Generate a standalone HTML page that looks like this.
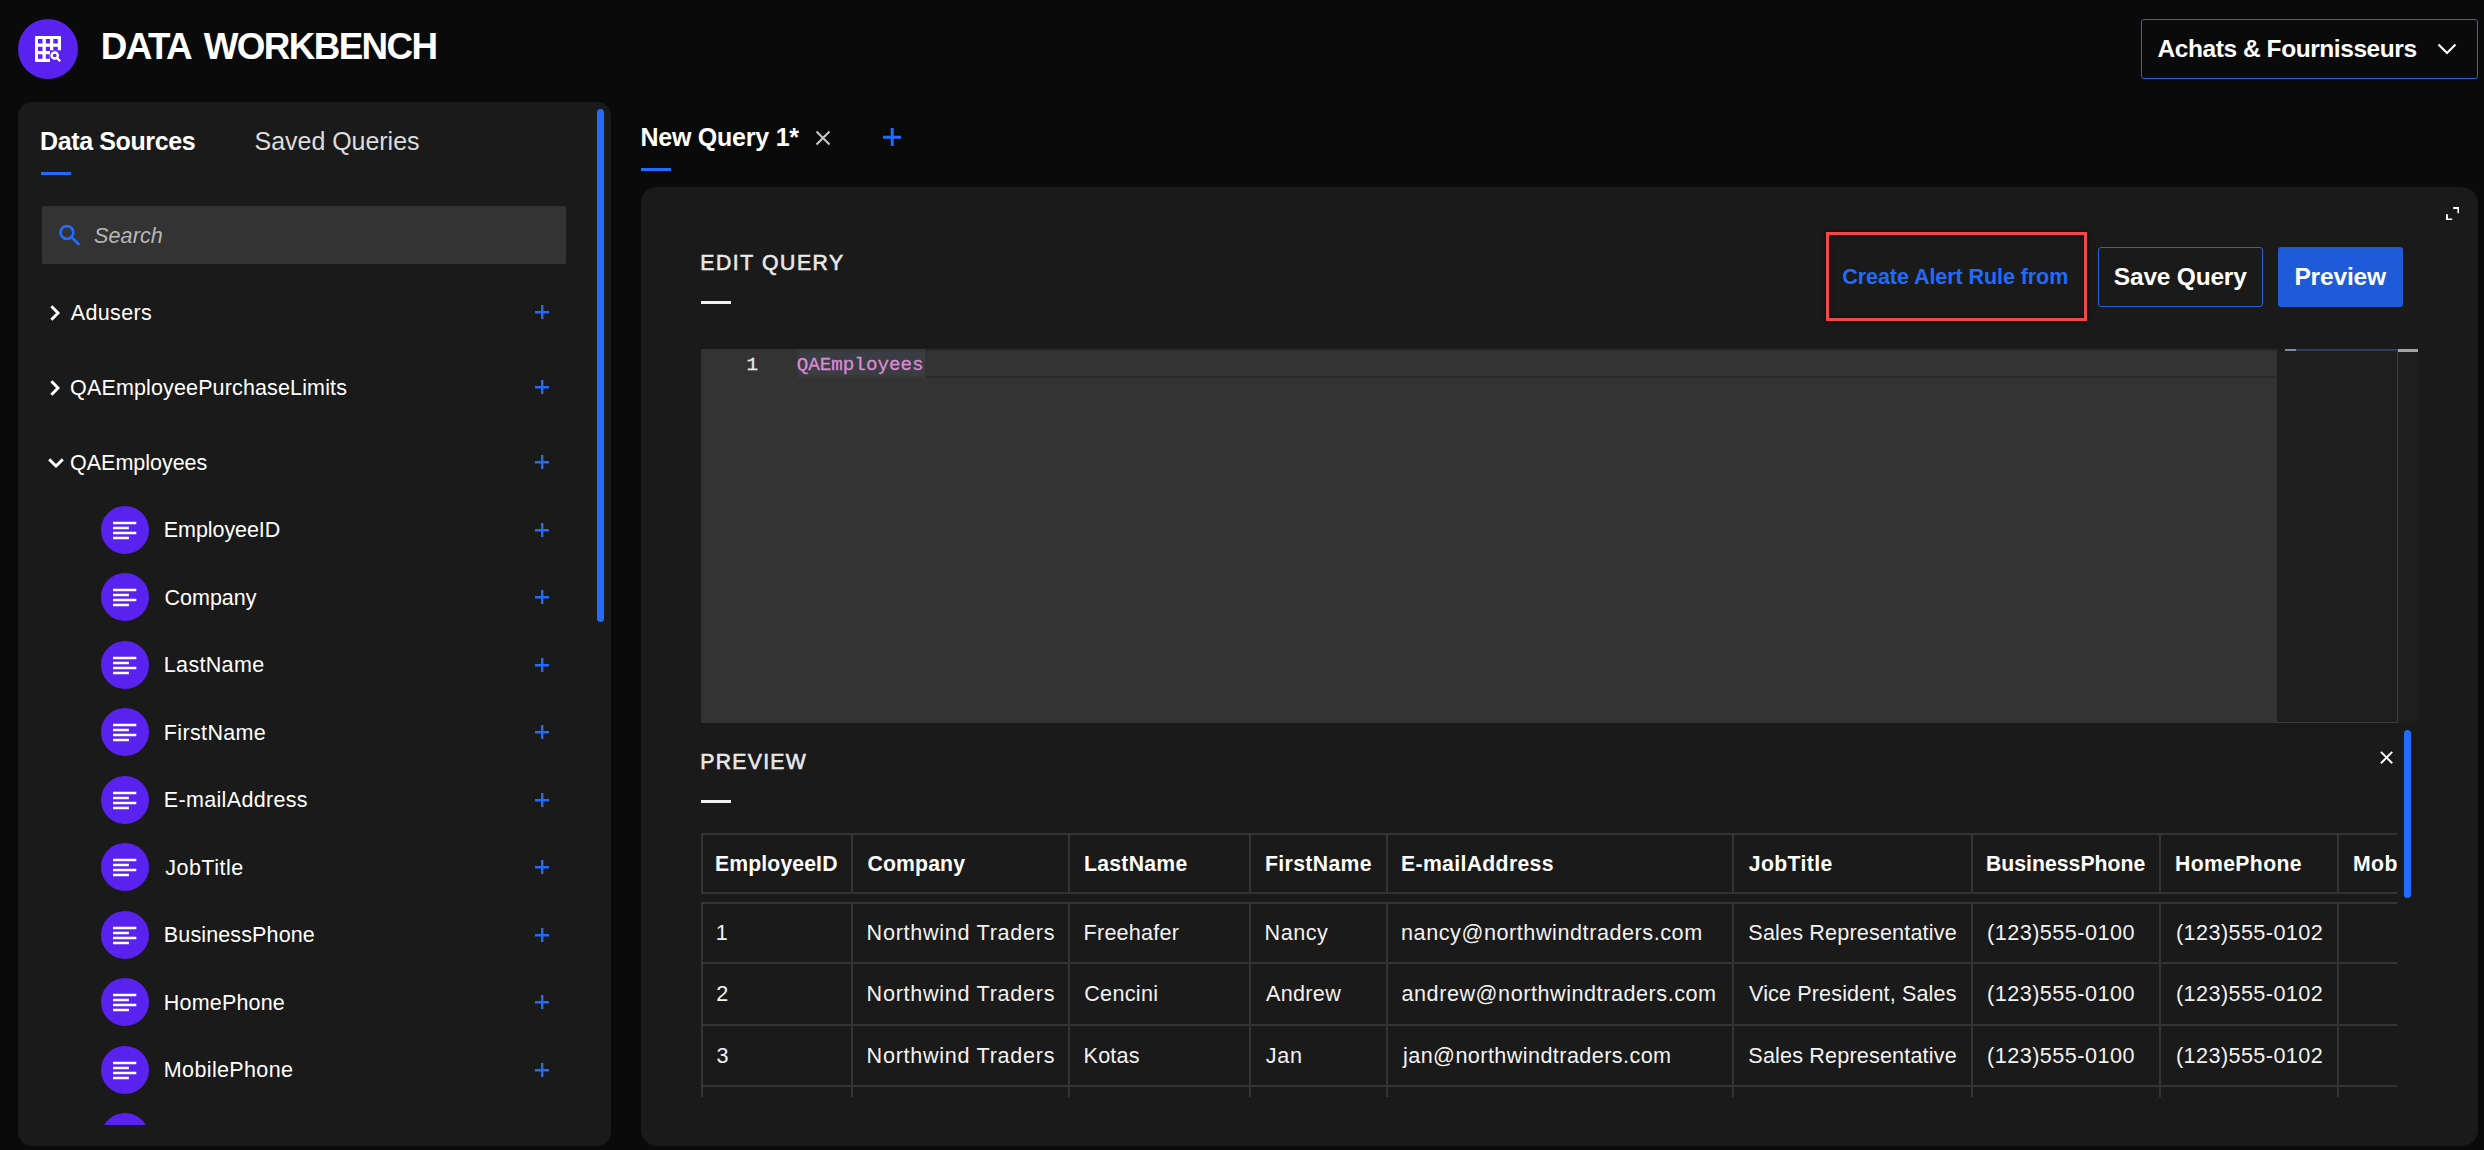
<!DOCTYPE html>
<html><head><meta charset="utf-8"><title>Data Workbench</title>
<style>
html,body{margin:0;padding:0;background:#0a0a0a;}
body{width:2484px;height:1150px;position:relative;overflow:hidden;font-family:"Liberation Sans", sans-serif;}
.a{position:absolute;display:block}
.t{position:absolute;display:block;white-space:nowrap;line-height:1;font-family:"Liberation Sans", sans-serif}
</style></head><body>
<div class="a" style="left:18px;top:19px;width:60px;height:60px;border-radius:50%;background:#5a22ee"></div>
<svg class="a" style="left:35px;top:36px" width="27" height="27" viewBox="0 0 27 27">
<path fill="#fff" d="M0.8 0H25.2Q26 0 26 0.8V14.3H15V26H0.8Q0 26 0 25.2V0.8Q0 0 0.8 0Z"/>
<g fill="#5a22ee"><rect x="3" y="3" width="4.5" height="4.5"/><rect x="10.8" y="3" width="4.2" height="4.5"/><rect x="18.3" y="3" width="4.5" height="4.5"/>
<rect x="3" y="10.8" width="4.5" height="4.2"/><rect x="10.8" y="10.8" width="4.2" height="4.2"/><rect x="18.3" y="10.8" width="4.5" height="3.6"/>
<rect x="3" y="18.3" width="4.5" height="4.5"/><rect x="10.8" y="18.3" width="3.9" height="4.5"/></g>
<circle cx="19.7" cy="19.5" r="3.1" fill="none" stroke="#fff" stroke-width="2.5"/><path d="M21.9 21.9L25.2 25.2" stroke="#fff" stroke-width="2.3" stroke-linecap="butt"/></svg>
<span id="title" class="t" style="left:100.8px;top:29.00px;font-size:36.8px;font-weight:700;color:#fff;letter-spacing:-1.62px;word-spacing:5.4px">DATA WORKBENCH</span>
<div class="a" style="left:2141px;top:19px;width:337px;height:60px;box-sizing:border-box;border:1.5px solid #2462e0;border-radius:3px"></div>
<svg class="a" style="left:2436px;top:42px" width="22" height="14" viewBox="0 0 22 14"><path d="M2.5 2.5L11 11L19.5 2.5" stroke="#fff" stroke-width="2.2" fill="none"/></svg>
<div class="a" style="left:18px;top:102px;width:593px;height:1044px;background:#1a1a1a;border-radius:14px"></div>
<div class="a" style="left:597px;top:109px;width:7px;height:513px;background:#216bff;border-radius:4px"></div>
<div class="a" style="left:41px;top:172px;width:30px;height:3.2px;background:#216bff"></div>
<div class="a" style="left:42px;top:206px;width:524px;height:58px;background:#333;border-radius:2px"></div>
<svg class="a" style="left:56px;top:222px" width="28" height="28" viewBox="0 0 28 28"><circle cx="10.9" cy="10.5" r="6.4" fill="none" stroke="#216bff" stroke-width="2.7"/><path d="M15.4 15L23.4 23" stroke="#216bff" stroke-width="2.8"/></svg>
<svg class="a" style="left:49px;top:304px" width="13" height="18" viewBox="0 0 13 18"><path d="M2.4 2.2L9 9L2.4 15.8" stroke="#fff" stroke-width="2.9" fill="none"/></svg>
<svg class="a" style="left:49px;top:379px" width="13" height="18" viewBox="0 0 13 18"><path d="M2.4 2.2L9 9L2.4 15.8" stroke="#fff" stroke-width="2.9" fill="none"/></svg>
<svg class="a" style="left:46.6px;top:456.6px" width="18" height="13" viewBox="0 0 18 13"><path d="M2.2 2.4L9 9L15.8 2.4" stroke="#fff" stroke-width="2.9" fill="none"/></svg>
<svg class="a" style="left:535.0999999999999px;top:304.8px" width="14.4" height="14.4" viewBox="0 0 14.4 14.4"><path d="M7.2 0V14.4M0 7.2H14.4" stroke="#216bff" stroke-width="2.4" fill="none"/></svg>
<svg class="a" style="left:535.0999999999999px;top:379.8px" width="14.4" height="14.4" viewBox="0 0 14.4 14.4"><path d="M7.2 0V14.4M0 7.2H14.4" stroke="#216bff" stroke-width="2.4" fill="none"/></svg>
<svg class="a" style="left:535.0999999999999px;top:454.8px" width="14.4" height="14.4" viewBox="0 0 14.4 14.4"><path d="M7.2 0V14.4M0 7.2H14.4" stroke="#216bff" stroke-width="2.4" fill="none"/></svg>
<div class="a" style="left:18px;top:480px;width:580px;height:645px;overflow:hidden">
<div class="a" style="left:83px;top:26px;width:48px;height:48px;border-radius:50%;background:#5a22ee"></div>
<svg class="a" style="left:94px;top:40px" width="26" height="20" viewBox="0 0 26 20"><path d="M1 3H24.3M1 8H16.9M1 13H24.3M1 18H16.9" stroke="#fff" stroke-width="2.5" fill="none"/></svg>
<svg class="a" style="left:517.0999999999999px;top:42.8px" width="14.4" height="14.4" viewBox="0 0 14.4 14.4"><path d="M7.2 0V14.4M0 7.2H14.4" stroke="#216bff" stroke-width="2.4" fill="none"/></svg>
<div class="a" style="left:83px;top:93px;width:48px;height:48px;border-radius:50%;background:#5a22ee"></div>
<svg class="a" style="left:94px;top:107px" width="26" height="20" viewBox="0 0 26 20"><path d="M1 3H24.3M1 8H16.9M1 13H24.3M1 18H16.9" stroke="#fff" stroke-width="2.5" fill="none"/></svg>
<svg class="a" style="left:517.0999999999999px;top:109.8px" width="14.4" height="14.4" viewBox="0 0 14.4 14.4"><path d="M7.2 0V14.4M0 7.2H14.4" stroke="#216bff" stroke-width="2.4" fill="none"/></svg>
<div class="a" style="left:83px;top:161px;width:48px;height:48px;border-radius:50%;background:#5a22ee"></div>
<svg class="a" style="left:94px;top:175px" width="26" height="20" viewBox="0 0 26 20"><path d="M1 3H24.3M1 8H16.9M1 13H24.3M1 18H16.9" stroke="#fff" stroke-width="2.5" fill="none"/></svg>
<svg class="a" style="left:517.0999999999999px;top:177.8px" width="14.4" height="14.4" viewBox="0 0 14.4 14.4"><path d="M7.2 0V14.4M0 7.2H14.4" stroke="#216bff" stroke-width="2.4" fill="none"/></svg>
<div class="a" style="left:83px;top:228px;width:48px;height:48px;border-radius:50%;background:#5a22ee"></div>
<svg class="a" style="left:94px;top:242px" width="26" height="20" viewBox="0 0 26 20"><path d="M1 3H24.3M1 8H16.9M1 13H24.3M1 18H16.9" stroke="#fff" stroke-width="2.5" fill="none"/></svg>
<svg class="a" style="left:517.0999999999999px;top:244.8px" width="14.4" height="14.4" viewBox="0 0 14.4 14.4"><path d="M7.2 0V14.4M0 7.2H14.4" stroke="#216bff" stroke-width="2.4" fill="none"/></svg>
<div class="a" style="left:83px;top:296px;width:48px;height:48px;border-radius:50%;background:#5a22ee"></div>
<svg class="a" style="left:94px;top:310px" width="26" height="20" viewBox="0 0 26 20"><path d="M1 3H24.3M1 8H16.9M1 13H24.3M1 18H16.9" stroke="#fff" stroke-width="2.5" fill="none"/></svg>
<svg class="a" style="left:517.0999999999999px;top:312.8px" width="14.4" height="14.4" viewBox="0 0 14.4 14.4"><path d="M7.2 0V14.4M0 7.2H14.4" stroke="#216bff" stroke-width="2.4" fill="none"/></svg>
<div class="a" style="left:83px;top:363px;width:48px;height:48px;border-radius:50%;background:#5a22ee"></div>
<svg class="a" style="left:94px;top:377px" width="26" height="20" viewBox="0 0 26 20"><path d="M1 3H24.3M1 8H16.9M1 13H24.3M1 18H16.9" stroke="#fff" stroke-width="2.5" fill="none"/></svg>
<svg class="a" style="left:517.0999999999999px;top:379.8px" width="14.4" height="14.4" viewBox="0 0 14.4 14.4"><path d="M7.2 0V14.4M0 7.2H14.4" stroke="#216bff" stroke-width="2.4" fill="none"/></svg>
<div class="a" style="left:83px;top:431px;width:48px;height:48px;border-radius:50%;background:#5a22ee"></div>
<svg class="a" style="left:94px;top:445px" width="26" height="20" viewBox="0 0 26 20"><path d="M1 3H24.3M1 8H16.9M1 13H24.3M1 18H16.9" stroke="#fff" stroke-width="2.5" fill="none"/></svg>
<svg class="a" style="left:517.0999999999999px;top:447.8px" width="14.4" height="14.4" viewBox="0 0 14.4 14.4"><path d="M7.2 0V14.4M0 7.2H14.4" stroke="#216bff" stroke-width="2.4" fill="none"/></svg>
<div class="a" style="left:83px;top:498px;width:48px;height:48px;border-radius:50%;background:#5a22ee"></div>
<svg class="a" style="left:94px;top:512px" width="26" height="20" viewBox="0 0 26 20"><path d="M1 3H24.3M1 8H16.9M1 13H24.3M1 18H16.9" stroke="#fff" stroke-width="2.5" fill="none"/></svg>
<svg class="a" style="left:517.0999999999999px;top:514.8px" width="14.4" height="14.4" viewBox="0 0 14.4 14.4"><path d="M7.2 0V14.4M0 7.2H14.4" stroke="#216bff" stroke-width="2.4" fill="none"/></svg>
<div class="a" style="left:83px;top:566px;width:48px;height:48px;border-radius:50%;background:#5a22ee"></div>
<svg class="a" style="left:94px;top:580px" width="26" height="20" viewBox="0 0 26 20"><path d="M1 3H24.3M1 8H16.9M1 13H24.3M1 18H16.9" stroke="#fff" stroke-width="2.5" fill="none"/></svg>
<svg class="a" style="left:517.0999999999999px;top:582.8px" width="14.4" height="14.4" viewBox="0 0 14.4 14.4"><path d="M7.2 0V14.4M0 7.2H14.4" stroke="#216bff" stroke-width="2.4" fill="none"/></svg>
<div class="a" style="left:83px;top:633px;width:48px;height:48px;border-radius:50%;background:#5a22ee"></div>
<svg class="a" style="left:94px;top:647px" width="26" height="20" viewBox="0 0 26 20"><path d="M1 3H24.3M1 8H16.9M1 13H24.3M1 18H16.9" stroke="#fff" stroke-width="2.5" fill="none"/></svg>
</div>
<svg class="a" style="left:815px;top:130px" width="16" height="16" viewBox="0 0 16 16"><path d="M1.5 1.5L14.5 14.5M14.5 1.5L1.5 14.5" stroke="#c8c8c8" stroke-width="2" fill="none"/></svg>
<svg class="a" style="left:882.5px;top:127.7px" width="18.4" height="18.4" viewBox="0 0 18.4 18.4"><path d="M9.2 0V18.4M0 9.2H18.4" stroke="#216bff" stroke-width="3" fill="none"/></svg>
<div class="a" style="left:641px;top:167.5px;width:30px;height:3.5px;background:#216bff"></div>
<div class="a" style="left:641px;top:186.6px;width:1837px;height:959.4px;background:#1a1a1a;border-radius:16px"></div>
<div class="a" style="left:701px;top:301px;width:30px;height:3px;background:#f2f2f2"></div>
<div class="a" style="left:701px;top:800px;width:30px;height:3px;background:#f2f2f2"></div>
<svg class="a" style="left:2446px;top:207px" width="13.4" height="13.4" viewBox="0 0 14 14"><path d="M7.5 1H13V6.5M6.5 13H1V7.5" stroke="#fff" stroke-width="2" fill="none"/></svg>
<div class="a" style="left:1826px;top:232px;width:261px;height:89px;box-sizing:border-box;border:3px solid #f2474b;box-shadow:0 0 5px rgba(0,0,0,.55),inset 0 0 5px rgba(0,0,0,.55)"></div>
<div class="a" style="left:2098px;top:247px;width:165px;height:60px;box-sizing:border-box;border:1.5px solid #2462e0;border-radius:3px"></div>
<div class="a" style="left:2278px;top:247px;width:125px;height:60px;background:#1d5bd8;border-radius:3px"></div>
<div class="a" style="left:701px;top:349px;width:1717px;height:374px;background:#1e1e1e"></div>
<div class="a" style="left:701px;top:349px;width:1576px;height:374px;background:#333"></div>
<div class="a" style="left:797px;top:349px;width:1480px;height:29px;box-sizing:border-box;border-top:2.5px solid #2a2a2a;border-bottom:2.5px solid #2a2a2a"></div>
<div class="a" style="left:797px;top:349px;width:128px;height:29px;background:#36383a"></div>
<div class="a" style="left:800px;top:352px;width:125px;height:23px;background:#3a3d41"></div>
<div class="a" style="left:2285px;top:349px;width:112px;height:2px;background:#27405f"></div>
<div class="a" style="left:2285px;top:349px;width:11px;height:1.5px;background:#7f8fa3"></div>
<div class="a" style="left:2397px;top:349px;width:1px;height:374px;background:#3c3c3c"></div>
<div class="a" style="left:2277px;top:722px;width:121px;height:1px;background:#3c3c3c"></div>
<div class="a" style="left:2398px;top:349px;width:20px;height:3px;background:#a2a2a2"></div>
<span id="ln" class="t" style="left:746.5px;top:356px;font-family:'Liberation Mono',monospace;font-size:19.2px;color:#eaeaea;-webkit-text-stroke:0.3px #eaeaea">1</span>
<span id="code" class="t" style="left:796.8px;top:356px;font-family:'Liberation Mono',monospace;font-size:19.2px;color:#dd8ad6;-webkit-text-stroke:0.3px #dd8ad6">QAEmployees</span>
<svg class="a" style="left:2379.6px;top:750.6px" width="13.2" height="13.2" viewBox="0 0 14 14"><path d="M1 1L13 13M13 1L1 13" stroke="#fff" stroke-width="2" fill="none"/></svg>
<div class="a" style="left:2404px;top:730px;width:7px;height:168px;background:#216bff;border-radius:4px"></div>
<div class="a" style="left:701px;top:833px;width:1696px;height:264px;overflow:hidden">
<div class="a" style="left:0.0px;top:0;width:2px;height:60.6px;background:#343434"></div>
<div class="a" style="left:0.0px;top:68.8px;width:2px;height:200px;background:#343434"></div>
<div class="a" style="left:149.8px;top:0;width:2px;height:60.6px;background:#343434"></div>
<div class="a" style="left:149.8px;top:68.8px;width:2px;height:200px;background:#343434"></div>
<div class="a" style="left:366.8px;top:0;width:2px;height:60.6px;background:#343434"></div>
<div class="a" style="left:366.8px;top:68.8px;width:2px;height:200px;background:#343434"></div>
<div class="a" style="left:547.8px;top:0;width:2px;height:60.6px;background:#343434"></div>
<div class="a" style="left:547.8px;top:68.8px;width:2px;height:200px;background:#343434"></div>
<div class="a" style="left:684.7px;top:0;width:2px;height:60.6px;background:#343434"></div>
<div class="a" style="left:684.7px;top:68.8px;width:2px;height:200px;background:#343434"></div>
<div class="a" style="left:1031.3px;top:0;width:2px;height:60.6px;background:#343434"></div>
<div class="a" style="left:1031.3px;top:68.8px;width:2px;height:200px;background:#343434"></div>
<div class="a" style="left:1270.0px;top:0;width:2px;height:60.6px;background:#343434"></div>
<div class="a" style="left:1270.0px;top:68.8px;width:2px;height:200px;background:#343434"></div>
<div class="a" style="left:1457.5px;top:0;width:2px;height:60.6px;background:#343434"></div>
<div class="a" style="left:1457.5px;top:68.8px;width:2px;height:200px;background:#343434"></div>
<div class="a" style="left:1635.8px;top:0;width:2px;height:60.6px;background:#343434"></div>
<div class="a" style="left:1635.8px;top:68.8px;width:2px;height:200px;background:#343434"></div>
<div class="a" style="left:0;top:0.00px;width:1700px;height:2px;background:#343434"></div>
<div class="a" style="left:0;top:58.70px;width:1700px;height:2px;background:#343434"></div>
<div class="a" style="left:0;top:68.50px;width:1700px;height:2px;background:#343434"></div>
<div class="a" style="left:0;top:128.55px;width:1700px;height:2.3px;background:#343434"></div>
<div class="a" style="left:0;top:190.85px;width:1700px;height:2.3px;background:#343434"></div>
<div class="a" style="left:0;top:251.65px;width:1700px;height:2.3px;background:#343434"></div>
<span id="hmob" class="t" style="left:1652px;top:20.00px;font-size:21.2px;font-weight:700;color:#fff;letter-spacing:0.4px">MobilePhone</span>
</div>
<span id="dd" class="t" style="left:2157.54px;top:37.00px;font-size:24.5px;font-weight:700;color:#fff;letter-spacing:-0.436px;">Achats &amp; Fournisseurs</span>
<span id="tab1" class="t" style="left:40.05px;top:129.00px;font-size:25px;font-weight:700;color:#fff;letter-spacing:-0.386px;">Data Sources</span>
<span id="tab2" class="t" style="left:254.56px;top:129.00px;font-size:25px;font-weight:400;color:#dcdcdc;letter-spacing:-0.034px;">Saved Queries</span>
<span id="search" class="t" style="left:93.98px;top:226.00px;font-size:21.5px;font-weight:400;color:#b8b8b8;letter-spacing:0.144px;font-style:italic;">Search</span>
<span id="t1" class="t" style="left:70.72px;top:303.00px;font-size:21.5px;font-weight:400;color:#fff;letter-spacing:0.369px;">Adusers</span>
<span id="t2" class="t" style="left:70.07px;top:378.00px;font-size:21.5px;font-weight:400;color:#fff;letter-spacing:0.140px;">QAEmployeePurchaseLimits</span>
<span id="t3" class="t" style="left:70.07px;top:453.00px;font-size:21.5px;font-weight:400;color:#fff;letter-spacing:-0.022px;">QAEmployees</span>
<span id="qtab" class="t" style="left:640.41px;top:125.00px;font-size:25px;font-weight:700;color:#fff;letter-spacing:-0.226px;">New Query 1*</span>
<span id="eq" class="t" style="left:700.21px;top:252.00px;font-size:21.2px;font-weight:400;color:#e9e9e9;letter-spacing:1.591px;-webkit-text-stroke:0.6px #e9e9e9;">EDIT QUERY</span>
<span id="pv" class="t" style="left:700.36px;top:751.00px;font-size:21.2px;font-weight:400;color:#e9e9e9;letter-spacing:1.282px;-webkit-text-stroke:0.6px #e9e9e9;">PREVIEW</span>
<span id="car" class="t" style="left:1842.30px;top:266.00px;font-size:21.6px;font-weight:700;color:#1f6bff;letter-spacing:-0.112px;">Create Alert Rule from</span>
<span id="sq" class="t" style="left:2113.83px;top:265.00px;font-size:24.5px;font-weight:700;color:#fff;letter-spacing:-0.208px;">Save Query</span>
<span id="pb" class="t" style="left:2294.46px;top:265.00px;font-size:24.5px;font-weight:700;color:#fff;letter-spacing:-0.174px;">Preview</span>
<span id="k0" class="t" style="left:163.85px;top:520.00px;font-size:21.5px;font-weight:400;color:#fff;letter-spacing:-0.075px;">EmployeeID</span>
<span id="k1" class="t" style="left:164.51px;top:588.00px;font-size:21.5px;font-weight:400;color:#fff;letter-spacing:0.003px;">Company</span>
<span id="k2" class="t" style="left:163.85px;top:655.00px;font-size:21.5px;font-weight:400;color:#fff;letter-spacing:0.322px;">LastName</span>
<span id="k3" class="t" style="left:163.85px;top:723.00px;font-size:21.5px;font-weight:400;color:#fff;letter-spacing:0.351px;">FirstName</span>
<span id="k4" class="t" style="left:163.85px;top:790.00px;font-size:21.5px;font-weight:400;color:#fff;letter-spacing:0.325px;">E-mailAddress</span>
<span id="k5" class="t" style="left:165.19px;top:858.00px;font-size:21.5px;font-weight:400;color:#fff;letter-spacing:0.493px;">JobTitle</span>
<span id="k6" class="t" style="left:163.85px;top:925.00px;font-size:21.5px;font-weight:400;color:#fff;letter-spacing:0.125px;">BusinessPhone</span>
<span id="k7" class="t" style="left:163.85px;top:993.00px;font-size:21.5px;font-weight:400;color:#fff;letter-spacing:0.175px;">HomePhone</span>
<span id="k8" class="t" style="left:163.85px;top:1060.00px;font-size:21.5px;font-weight:400;color:#fff;letter-spacing:0.362px;">MobilePhone</span>
<span id="h0" class="t" style="left:715.00px;top:853.00px;font-size:21.2px;font-weight:700;color:#fff;letter-spacing:0.129px;">EmployeeID</span>
<span id="h1" class="t" style="left:867.57px;top:853.00px;font-size:21.2px;font-weight:700;color:#fff;letter-spacing:0.137px;">Company</span>
<span id="h2" class="t" style="left:1084.00px;top:853.00px;font-size:21.2px;font-weight:700;color:#fff;letter-spacing:0.286px;">LastName</span>
<span id="h3" class="t" style="left:1265.00px;top:853.00px;font-size:21.2px;font-weight:700;color:#fff;letter-spacing:0.375px;">FirstName</span>
<span id="h4" class="t" style="left:1401.00px;top:853.00px;font-size:21.2px;font-weight:700;color:#fff;letter-spacing:0.346px;">E-mailAddress</span>
<span id="h5" class="t" style="left:1748.84px;top:853.00px;font-size:21.2px;font-weight:700;color:#fff;letter-spacing:0.375px;">JobTitle</span>
<span id="h6" class="t" style="left:1986.00px;top:853.00px;font-size:21.2px;font-weight:700;color:#fff;letter-spacing:0.022px;">BusinessPhone</span>
<span id="h7" class="t" style="left:2175.00px;top:853.00px;font-size:21.2px;font-weight:700;color:#fff;letter-spacing:0.375px;">HomePhone</span>
<span id="r0c0" class="t" style="left:715.81px;top:922.00px;font-size:21.6px;font-weight:400;color:#f2f2f2;letter-spacing:0.000px;">1</span>
<span id="r0c1" class="t" style="left:866.61px;top:922.00px;font-size:21.6px;font-weight:400;color:#f2f2f2;letter-spacing:0.714px;">Northwind Traders</span>
<span id="r0c2" class="t" style="left:1083.61px;top:922.00px;font-size:21.6px;font-weight:400;color:#f2f2f2;letter-spacing:0.201px;">Freehafer</span>
<span id="r0c3" class="t" style="left:1264.61px;top:922.00px;font-size:21.6px;font-weight:400;color:#f2f2f2;letter-spacing:0.523px;">Nancy</span>
<span id="r0c4" class="t" style="left:1401.00px;top:922.00px;font-size:21.6px;font-weight:400;color:#f2f2f2;letter-spacing:0.560px;">nancy@northwindtraders.com</span>
<span id="r0c5" class="t" style="left:1748.36px;top:922.00px;font-size:21.6px;font-weight:400;color:#f2f2f2;letter-spacing:0.159px;">Sales Representative</span>
<span id="r0c6" class="t" style="left:1987.00px;top:922.00px;font-size:21.6px;font-weight:400;color:#f2f2f2;letter-spacing:0.483px;">(123)555-0100</span>
<span id="r0c7" class="t" style="left:2176.00px;top:922.00px;font-size:21.6px;font-weight:400;color:#f2f2f2;letter-spacing:0.417px;">(123)555-0102</span>
<span id="r1c0" class="t" style="left:716.31px;top:983.00px;font-size:21.6px;font-weight:400;color:#f2f2f2;letter-spacing:0.000px;">2</span>
<span id="r1c1" class="t" style="left:866.61px;top:983.00px;font-size:21.6px;font-weight:400;color:#f2f2f2;letter-spacing:0.714px;">Northwind Traders</span>
<span id="r1c2" class="t" style="left:1084.21px;top:983.00px;font-size:21.6px;font-weight:400;color:#f2f2f2;letter-spacing:0.298px;">Cencini</span>
<span id="r1c3" class="t" style="left:1266.00px;top:983.00px;font-size:21.6px;font-weight:400;color:#f2f2f2;letter-spacing:0.305px;">Andrew</span>
<span id="r1c4" class="t" style="left:1401.50px;top:983.00px;font-size:21.6px;font-weight:400;color:#f2f2f2;letter-spacing:0.547px;">andrew@northwindtraders.com</span>
<span id="r1c5" class="t" style="left:1749.00px;top:983.00px;font-size:21.6px;font-weight:400;color:#f2f2f2;letter-spacing:0.129px;">Vice President, Sales</span>
<span id="r1c6" class="t" style="left:1987.00px;top:983.00px;font-size:21.6px;font-weight:400;color:#f2f2f2;letter-spacing:0.483px;">(123)555-0100</span>
<span id="r1c7" class="t" style="left:2176.00px;top:983.00px;font-size:21.6px;font-weight:400;color:#f2f2f2;letter-spacing:0.417px;">(123)555-0102</span>
<span id="r2c0" class="t" style="left:716.49px;top:1045.00px;font-size:21.6px;font-weight:400;color:#f2f2f2;letter-spacing:0.000px;">3</span>
<span id="r2c1" class="t" style="left:866.61px;top:1045.00px;font-size:21.6px;font-weight:400;color:#f2f2f2;letter-spacing:0.714px;">Northwind Traders</span>
<span id="r2c2" class="t" style="left:1083.61px;top:1045.00px;font-size:21.6px;font-weight:400;color:#f2f2f2;letter-spacing:0.152px;">Kotas</span>
<span id="r2c3" class="t" style="left:1265.85px;top:1045.00px;font-size:21.6px;font-weight:400;color:#f2f2f2;letter-spacing:0.644px;">Jan</span>
<span id="r2c4" class="t" style="left:1403.00px;top:1045.00px;font-size:21.6px;font-weight:400;color:#f2f2f2;letter-spacing:0.422px;">jan@northwindtraders.com</span>
<span id="r2c5" class="t" style="left:1748.36px;top:1045.00px;font-size:21.6px;font-weight:400;color:#f2f2f2;letter-spacing:0.159px;">Sales Representative</span>
<span id="r2c6" class="t" style="left:1987.00px;top:1045.00px;font-size:21.6px;font-weight:400;color:#f2f2f2;letter-spacing:0.483px;">(123)555-0100</span>
<span id="r2c7" class="t" style="left:2176.00px;top:1045.00px;font-size:21.6px;font-weight:400;color:#f2f2f2;letter-spacing:0.417px;">(123)555-0102</span>
</body></html>
